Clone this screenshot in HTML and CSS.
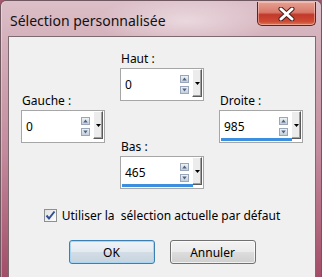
FILE: index.html
```html
<!DOCTYPE html>
<html lang="fr">
<head>
<meta charset="UTF-8">
<title>Sélection personnalisée</title>
<link rel="stylesheet" href="styles.css">
</head>
<body>

<div class="window">
  <div class="titlebar">
    <span class="title">Sélection personnalisée</span>
    <button class="close" aria-label="Fermer">
      <svg width="17" height="14" viewBox="0 0 17 14">
        <path d="M3 2 L14 12 M14 2 L3 12" stroke="#4a1e1a" stroke-width="5" stroke-linecap="round"/>
        <path d="M3 2 L14 12 M14 2 L3 12" stroke="#fff" stroke-width="3" stroke-linecap="round"/>
      </svg>
    </button>
  </div>

  <div class="client">
    <div class="fields">
      <div class="col side">
        <div class="field">
          <label for="gauche">Gauche :</label>
          <div class="spin" id="gauche">
            <span class="value">0</span>
            <span class="arrows">
              <span class="arrow"><svg viewBox="0 0 9 8"><path d="M1.5 6 L4.5 2 L7.5 6Z"/></svg></span>
              <span class="arrow"><svg viewBox="0 0 9 8"><path d="M1.5 2 L4.5 6 L7.5 2Z"/></svg></span>
            </span>
            <span class="drop"><svg viewBox="0 0 5 3"><path d="M0 0 H5 L2.5 3Z"/></svg></span>
          </div>
        </div>
      </div>

      <div class="col">
        <div class="field">
          <label for="haut">Haut :</label>
          <div class="spin" id="haut">
            <span class="value">0</span>
            <span class="arrows">
              <span class="arrow"><svg viewBox="0 0 9 8"><path d="M1.5 6 L4.5 2 L7.5 6Z"/></svg></span>
              <span class="arrow"><svg viewBox="0 0 9 8"><path d="M1.5 2 L4.5 6 L7.5 2Z"/></svg></span>
            </span>
            <span class="drop"><svg viewBox="0 0 5 3"><path d="M0 0 H5 L2.5 3Z"/></svg></span>
          </div>
        </div>
        <div class="field lower">
          <label for="bas">Bas :</label>
          <div class="spin filled" id="bas">
            <span class="value">465</span>
            <span class="arrows">
              <span class="arrow"><svg viewBox="0 0 9 8"><path d="M1.5 6 L4.5 2 L7.5 6Z"/></svg></span>
              <span class="arrow"><svg viewBox="0 0 9 8"><path d="M1.5 2 L4.5 6 L7.5 2Z"/></svg></span>
            </span>
            <span class="drop"><svg viewBox="0 0 5 3"><path d="M0 0 H5 L2.5 3Z"/></svg></span>
          </div>
        </div>
      </div>

      <div class="col side">
        <div class="field">
          <label for="droite">Droite :</label>
          <div class="spin filled" id="droite">
            <span class="value">985</span>
            <span class="arrows">
              <span class="arrow"><svg viewBox="0 0 9 8"><path d="M1.5 6 L4.5 2 L7.5 6Z"/></svg></span>
              <span class="arrow"><svg viewBox="0 0 9 8"><path d="M1.5 2 L4.5 6 L7.5 2Z"/></svg></span>
            </span>
            <span class="drop"><svg viewBox="0 0 5 3"><path d="M0 0 H5 L2.5 3Z"/></svg></span>
          </div>
        </div>
      </div>
    </div>

    <label class="check">
      <span class="box">
        <svg width="11" height="11" viewBox="0 0 11 11">
          <path d="M1.5 5.5 L4 8.5 L9.5 1.5" fill="none" stroke="#2f4f93" stroke-width="2"/>
        </svg>
      </span>
      <span class="check-text">Utiliser la&nbsp; sélection actuelle par défaut</span>
    </label>

    <div class="buttons">
      <button class="btn default">OK</button>
      <button class="btn">Annuler</button>
    </div>
  </div>
</div>

</body>
</html>
```

FILE: styles.css
```css
* {
  box-sizing: border-box;
}
body {
  margin: 0;
  width: 322px;
  height: 277px;
  overflow: hidden;
  font-family: "Noto Sans", "Open Sans", sans-serif;
  font-size: 12px;
  color: #000;
  background: #a5566e;
}
.window {
  width: 322px;
  height: 290px;
  display: flex;
  flex-direction: column;
  padding: 0 5px 0 7px;
  border: 1px solid #6f5860;
  border-bottom: none;
  border-radius: 6px 6px 0 0;
  background:
    radial-gradient(ellipse 90px 26px at 185px 20px, rgba(255, 255, 255, 0.45), rgba(255, 255, 255, 0)),
    linear-gradient(180deg, #dcbfc8 0, #d4b0bb 40px, #c38b9d 150px, #a24d68 277px);
  box-shadow: inset 1px 0 0 rgba(255, 255, 255, 0.35);
}
.titlebar {
  height: 35px;
  display: flex;
  align-items: flex-start;
  justify-content: space-between;
}
.title {
  margin: 11px 0 0 2px;
  font-size: 14px;
  line-height: 18px;
  color: #111;
}
.close {
  width: 59px;
  height: 24px;
  margin-top: 1px;
  padding: 0;
  border: 1px solid #5b2420;
  border-top: none;
  border-radius: 0 0 5px 5px;
  background: linear-gradient(180deg, #e6a092 0, #d87a6a 45%, #c2392b 55%, #cf4a34 85%, #dd7a5c 100%);
  box-shadow: inset 0 0 0 1px rgba(255, 220, 210, 0.45);
  display: flex;
  align-items: center;
  justify-content: center;
}
.client {
  flex: 1;
  background: #f0f0f0;
  border: 1px solid #7b6b70;
  padding-top: 14px;
}
.fields {
  display: flex;
  gap: 15px;
  padding-left: 12px;
}
.col.side {
  padding-top: 42px;
}
.field label {
  display: block;
  line-height: 15px;
  margin-bottom: 2px;
  padding-left: 1px;
}
.field.lower {
  margin-top: 38px;
}
.spin {
  position: relative;
  width: 84px;
  height: 33px;
  border: 1px solid #a6a6a6;
  background: #fff;
  display: flex;
  align-items: flex-start;
}
.spin .value {
  width: 59px;
  align-self: center;
  padding-left: 4px;
  line-height: 15px;
  margin-top: -1px;
}
.arrows {
  display: flex;
  flex-direction: column;
  gap: 3px;
  margin-top: 6px;
}
.arrow {
  width: 9px;
  height: 8px;
  border: 1px solid #9aa7ba;
  background: linear-gradient(180deg, #eef2f7, #c3cedc);
  display: flex;
}
.arrow svg {
  width: 7px;
  height: 6px;
  fill: #52627f;
}
.drop {
  width: 10px;
  height: 28px;
  margin-left: 3px;
  border-left: 1px solid #fff;
  border-top: 1px solid #fff;
  border-right: 1px solid #5a5a5a;
  border-bottom: 1px solid #5a5a5a;
  background: #ececec;
  box-shadow: inset -1px -1px 0 #a0a0a0;
  display: flex;
  align-items: center;
  justify-content: center;
}
.drop svg {
  width: 5px;
  height: 3px;
  fill: #000;
}
.spin.filled::after {
  content: "";
  position: absolute;
  left: 1px;
  bottom: 1px;
  width: 71px;
  height: 3px;
  background: #3b8fde;
}
.check {
  margin-top: 19px;
  height: 15px;
  display: flex;
  align-items: center;
  justify-content: center;
  gap: 5px;
  line-height: 15px;
}
.check .box {
  width: 13px;
  height: 13px;
  border: 1px solid #8e8f8f;
  background: linear-gradient(135deg, #e2e2e2, #fdfdfd);
  display: flex;
  align-items: center;
  justify-content: center;
}
.buttons {
  margin-top: 17px;
  display: flex;
  justify-content: center;
  gap: 15px;
}
.btn {
  width: 86px;
  height: 24px;
  padding: 0;
  font-family: inherit;
  font-size: 12px;
  color: #000;
  border: 1px solid #707070;
  border-radius: 3px;
  background: linear-gradient(180deg, #f2f2f2 0, #ebebeb 50%, #dddddd 50%, #cfcfcf 100%);
  box-shadow: inset 0 0 0 1px rgba(255, 255, 255, 0.7);
}
.btn.default {
  border-color: #3c7fb1;
  background: linear-gradient(180deg, #eef3f7 0, #e3eaf0 50%, #d3dde6 50%, #c6d3de 100%);
  box-shadow: inset 0 0 0 1px #a6d6f4;
}
```
